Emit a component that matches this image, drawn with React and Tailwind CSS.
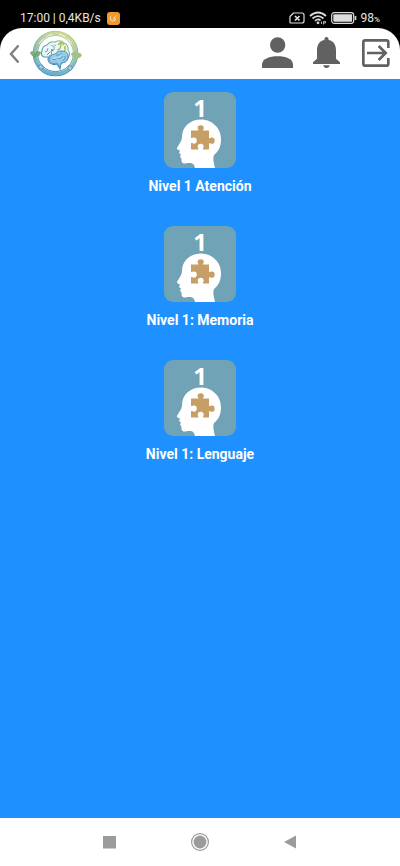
const levels = [
    { id: 'atencion', number: 1, title: 'Nivel 1 Atención' },
    { id: 'memoria', number: 1, title: 'Nivel 1: Memoria' },
    { id: 'lenguaje', number: 1, title: 'Nivel 1: Lenguaje' },
];

const StatusBar = () => {
    return (
        <div className="flex h-7 items-center justify-between bg-black pt-2 pr-5 pl-5 text-xs text-[#e4e4e4]">
            <div className="flex items-center gap-1.5">
                <span>17:00 | 0,4KB/s</span>
                <svg viewBox="0 0 13 13" className="h-[13px] w-[13px]">
                    <rect width="13" height="13" rx="3" fill="#ee9a2e" />
                    <path d="M3.500 4.500V7Q3.500 9 6 9T8.500 7L6 6.500M7 6L9.500 3.500" fill="none" stroke="#fbe3bd" strokeWidth="1" />
                </svg>
            </div>
            <div className="flex items-center">
                {/* no sim */}
                <svg viewBox="0 0 16 12" className="mr-1 h-3 w-4" fill="none" stroke="#dcdcdc">
                    <path d="M4.500 1H13Q15 1 15 3V9Q15 11 13 11H1.500Q1 11 1 10.500V4.500Z" strokeWidth="1.200" strokeLinejoin="round" />
                    <path d="M6 4L10.500 8.500M10.500 4L6 8.500" strokeWidth="1.700" />
                </svg>
                {/* wifi */}
                <svg viewBox="0 0 18 14" className="mr-1 h-[14px] w-[18px]" fill="none" stroke="#dcdcdc" strokeWidth="1.700">
                    <path d="M1 5Q9 -2 17 5M3.500 7.500Q9 2.800 14.500 7.500M6 10Q9 7.200 11.500 9.500" />
                    <circle cx="9" cy="11.800" r="1.400" fill="#dcdcdc" stroke="none" />
                    <path d="M12.500 10.500V13M14.500 13.500V10.500H16.500V12H14.500" strokeWidth="0.800" />
                </svg>
                {/* battery */}
                <svg viewBox="0 0 26 12" className="mr-1 h-3 w-[26px]">
                    <rect x="0.700" y="0.700" width="22" height="10.600" rx="2.500" fill="none" stroke="#dcdcdc" strokeWidth="1.200" />
                    <rect x="2.300" y="2.300" width="18.800" height="7.400" rx="1" fill="#dcdcdc" />
                    <path d="M24.500 4V8" stroke="#dcdcdc" strokeWidth="1.600" />
                </svg>
                <span>98<span className="text-[8px] font-medium">%</span></span>
            </div>
        </div>
    )
}

const Logo = () => {
    return (
        <svg viewBox="0 0 54 47" className="h-[47px] w-[54px]" fill="none">
            <defs>
                <linearGradient id="ring" x1="0.600" y1="0" x2="0.300" y2="1">
                    <stop offset="0" stopColor="#bccb78" />
                    <stop offset="0.5" stopColor="#72ab9b" />
                    <stop offset="1" stopColor="#3c8fc2" />
                </linearGradient>
                <linearGradient id="brain" x1="1" y1="0" x2="0.500" y2="1">
                    <stop offset="0" stopColor="#a9c779" />
                    <stop offset="0.4" stopColor="#5faebb" />
                    <stop offset="1" stopColor="#3c8cc4" />
                </linearGradient>
            </defs>
            <circle cx="26.500" cy="23.500" r="20.300" stroke="url(#ring)" strokeWidth="3.400" opacity="0.75" />
            <circle cx="26.500" cy="23.500" r="22.300" stroke="url(#ring)" strokeWidth="1.100" />
            <circle cx="26.500" cy="23.500" r="18" stroke="url(#ring)" strokeWidth="1" />
            <path d="M10 14Q15 6 24 4M30 4Q38 6 43 14" stroke="#f2f7ea" strokeWidth="0.800" strokeDasharray="7 3" />
            {/* leaves on both sides */}
            <path d="M1 22Q5 20 7 24Q9 20 12 22Q11 27 7 27Q2 27 1 22Z" fill="#7db070" />
            <path d="M5 28Q6 24 9 21" stroke="#4f987d" />
            <path d="M42 24Q45 20 48 24Q50 21 53 25Q51 29 47 28Q43 28 42 24Z" fill="#a3c27e" />
            <circle cx="12" cy="37" r="2.200" fill="#a5d2df" stroke="#438dbb" strokeWidth="0.800" />
            <circle cx="41" cy="38" r="2.200" fill="#a5d2df" stroke="#438dbb" strokeWidth="0.800" />
            {/* brain */}
            <path d="M15 27Q11 25 13 21Q13 16 18 15Q21 11 26 12Q31 9 35 13Q40 15 39 20Q42 24 39 28Q38 33 32 33L31 39L28 34Q23 36 20 32Q18 29 20 27Z" fill="#edf6f6" stroke="url(#brain)" strokeWidth="1.100" />
            <path d="M20 30Q20 25 26 24Q29 20 34 21Q40 22 39 28Q37 33 32 33L31 38L28 33Q22 35 20 30Z" fill="#9bcbe4" stroke="#3c8cc4" strokeWidth="0.900" />
            <path d="M16 22Q19 22 19 18M20 26Q24 25 22 21Q26 21 25 17M18 25L21 22M22 29Q26 31 28 28Q32 30 34 26M27 25Q31 26 33 23M36 26Q37 29 34 31M22 15Q24 18 27 15" stroke="url(#brain)" strokeWidth="1" />
            <path d="M22 30Q24 27 28 28Q31 28 32 25" stroke="#e4f2f6" strokeWidth="0.700" />
            <path d="M28 20Q32 20 32 13M29 15L32 12L35 15M36 16V21" stroke="#a4c655" strokeWidth="1.600" />
            <circle cx="23" cy="20" r="1" fill="#3c94b8" />
        </svg>
    )
}

const Header = () => {
    return (
        <div className="bg-black">
            <header className="flex h-[51px] items-center justify-between rounded-t-[22px] bg-white pr-[10px] pl-[9px] text-[#616161]">
                <div className="flex items-center gap-[9px]">
                    <button type="button" aria-label="Volver">
                        <svg viewBox="0 0 11 20" className="h-5 w-[11px]" fill="none" stroke="#808080" strokeWidth="2.500">
                            <path d="M9.500 1.500L2 10L9.500 18.500" />
                        </svg>
                    </button>
                    <a href="#inicio" aria-label="Inicio">
                        <Logo />
                    </a>
                </div>
                <div className="flex items-center gap-5 pb-0.5">
                    <button type="button" aria-label="Perfil">
                        <svg viewBox="0 0 93 93" className="h-[31px] w-[31px]" fill="currentColor">
                            <circle cx="47" cy="24" r="23" />
                            <path d="M0 93V81C2 66 22 58 47 58S91 66 93 81V93Z" />
                        </svg>
                    </button>
                    <button type="button" aria-label="Notificaciones">
                        <svg viewBox="0 0 81 93" className="h-[31px] w-[27px]" fill="currentColor">
                            <path d="M34 9Q34 0 40.500 0T47 9C62 12 69 24 69 39V65L81 76V81H0V76L12 65V39C12 24 19 12 34 9Z" />
                            <path d="M31 85H50Q49 93 40.500 93T31 85Z" />
                        </svg>
                    </button>
                    <button type="button" aria-label="Salir" className="ml-0.5">
                        <svg viewBox="0 0 84 84" className="h-7 w-7" fill="none" stroke="currentColor" strokeWidth="8">
                            <path d="M79 27V10Q79 4 73 4H10Q4 4 4 10V74Q4 80 10 80H73Q79 80 79 74V57" />
                            <path d="M15 42H70M50 21L71 42L50 63" />
                        </svg>
                    </button>
                </div>
            </header>
        </div>
    )
}

const LevelImage = ({ number }) => {
    return (
        <svg viewBox="0 0 72 76" className="h-[76px] w-[72px] rounded-[9px] bg-[#6fa3b5]">
            <text x="36" y="25" textAnchor="middle" fill="#ffffff" className="font-['Open_Sans',sans-serif] text-2xl font-bold">{number}</text>
            <path d="M37 27.500C26 27.500 18 35 18 45C18 49 15 52 13 56Q12.500 57.500 16 58.500L15 61L17 62.500L16 64.500Q18 66 17.500 69Q18 72 22 71.500C27 70.500 30 71 31 76H51C50 71 48.500 67 50 63C55 59 57 54 57 47C57 36 48 27.500 37 27.500Z" fill="#ffffff" />
            <path d="M27 38.500H34.200C35 37.700 33.500 37.200 33.500 36.300A3.200 3 0 0 1 39.900 36.300C39.900 37.200 38.400 37.700 39.200 38.500H45V46C45.800 46.800 46.400 45.600 47.700 45.600A3 3.100 0 0 1 47.700 51.800C46.400 51.800 45.800 50.600 45 51.400V57.500H39.200C38.400 56.600 39.700 56 39.700 54.700A3 2.900 0 0 0 33.700 54.700C33.700 56 35 56.600 34.200 57.500H27V51.400C27.800 50.600 28.600 51.700 29.800 51.700A3 3.100 0 0 0 29.800 45.500C28.600 45.500 27.800 46.600 27 45.800Z" fill="#c69f66" />
        </svg>
    )
}

const LevelCard = ({ level }) => {
    return (
        <button type="button" className="flex flex-col items-center gap-2">
            <LevelImage number={level.number} />
            <span className="text-sm font-bold text-white">{level.title}</span>
        </button>
    )
}

const NavigationBar = () => {
    return (
        <nav className="flex h-12 items-center justify-between bg-white px-[103px] text-[#9b9b9b]">
            <button type="button" aria-label="Recientes">
                <svg viewBox="0 0 13 13" className="h-[13px] w-[13px]" fill="currentColor">
                    <rect width="13" height="12.500" />
                </svg>
            </button>
            <button type="button" aria-label="Pantalla de inicio">
                <svg viewBox="0 0 18 18" className="h-[18px] w-[18px]" fill="currentColor">
                    <circle cx="9" cy="9" r="8.400" fill="none" stroke="currentColor" strokeWidth="1.200" />
                    <circle cx="9" cy="9" r="6.400" />
                </svg>
            </button>
            <button type="button" aria-label="Atrás">
                <svg viewBox="0 0 13 14" className="h-[14px] w-[13px]" fill="currentColor">
                    <path d="M12 0.500V13.500L0 7Z" />
                </svg>
            </button>
        </nav>
    )
}

const App = () => {
    return (
        <div className="flex min-h-screen flex-col bg-[#1e90ff] font-[Roboto,sans-serif]">
            <StatusBar />
            <Header />
            <main className="flex flex-1 flex-col items-center gap-[30px] pt-[13px]">
                {levels.map((level) => (
                    <LevelCard key={level.id} level={level} />
                ))}
            </main>
            <NavigationBar />
        </div>
    )
}

export default App;
